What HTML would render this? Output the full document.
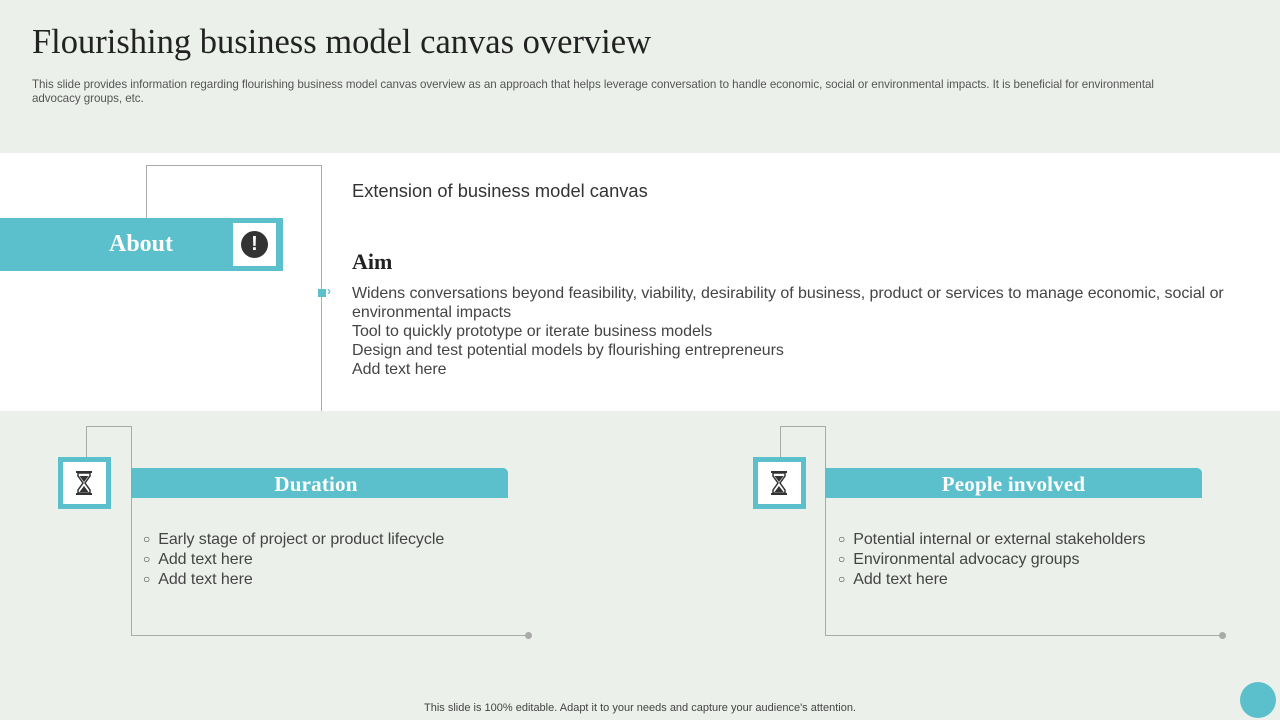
<!DOCTYPE html>
<html><head><style>
*{margin:0;padding:0;box-sizing:border-box}
body{width:1280px;height:720px;background:#ecf0eb;position:relative;overflow:hidden;font-family:"Liberation Sans",sans-serif;color:#404040}
.a{position:absolute}
h1{position:absolute;left:32px;top:23px;font-family:"Liberation Serif",serif;font-weight:normal;font-size:34.5px;color:#222}
.sub{left:32px;top:78px;font-size:11.6px;line-height:14px;color:#555;width:1165px;letter-spacing:-0.05px}
.white{left:0;top:153px;width:1280px;height:258px;background:#fff}
.teal{background:#5bbfcc}
.ser{font-family:"Liberation Serif",serif;font-weight:bold;color:#fff}
.ln{border-color:#aaa;border-style:solid;border-width:0}
.t{font-size:16px;line-height:19px;color:#444;letter-spacing:-0.05px}
ul{list-style:none}
li:before{content:"○";font-size:12px;margin-right:8px;position:relative;top:-1px}
</style></head><body>
<h1>Flourishing business model canvas overview</h1>
<div class="a sub">This slide provides information regarding flourishing business model canvas overview as an approach that helps leverage conversation to handle economic, social or environmental impacts. It is beneficial for environmental advocacy groups, etc.</div>
<div class="a white"></div>
<div class="a ln" style="left:146px;top:165px;width:176px;height:53px;border-width:1px 1px 0 1px"></div>
<div class="a ln" style="left:321px;top:218px;height:193px;border-left-width:1px"></div>
<div class="a teal" style="left:0;top:218px;width:283px;height:53px"></div>
<div class="a ser" style="left:0;top:231px;width:282px;text-align:center;font-size:24px">About</div>
<div class="a" style="left:233px;top:223px;width:43px;height:43px;background:#fff"></div>
<div class="a" style="left:241px;top:231px;width:27px;height:27px;border-radius:50%;background:#333;color:#fff;font-weight:bold;text-align:center;font-size:20px;line-height:27px">!</div>
<div class="a" style="left:318px;top:289px;width:8px;height:8px;background:#5bbfcc"></div>
<div class="a" style="left:327px;top:284px;font-size:12px;color:#5bbfcc;font-weight:bold">›</div>
<div class="a" style="left:352px;top:180px;font-size:18.3px;color:#333">Extension of business model canvas</div>
<div class="a" style="left:352px;top:249px;font-family:'Liberation Serif',serif;font-weight:bold;font-size:22px;color:#222">Aim</div>
<div class="a t" style="left:352px;top:284px;width:890px">Widens conversations beyond feasibility, viability, desirability of business, product or services to manage economic, social or environmental impacts<br>Tool to quickly prototype or iterate business models<br>Design and test potential models by flourishing entrepreneurs<br>Add text here</div>

<svg width="0" height="0" style="position:absolute"><defs><g id="hg"><rect x="0" y="0" width="16" height="2" fill="#333"/><rect x="0" y="22" width="16" height="2" fill="#333"/><path d="M2 2 H14 V5 L9 12 L14 19 V22 H2 V19 L7 12 L2 5 Z" fill="none" stroke="#333" stroke-width="1.5"/><path d="M3.5 5 H12.5 L8 11 Z" fill="#333"/><path d="M8 15 L12.5 21 H3.5 Z" fill="#333"/></g></defs></svg>

<div class="a ln" style="left:86px;top:426px;width:46px;height:31px;border-width:1px 1px 0 1px"></div>
<div class="a ln" style="left:131px;top:457px;width:398px;height:179px;border-width:0 0 1px 1px"></div>
<div class="a" style="left:525px;top:632px;width:7px;height:7px;border-radius:50%;background:#aaa"></div>
<div class="a" style="left:58px;top:457px;width:53px;height:52px;border:5px solid #5bbfcc;background:#fff"></div>
<svg class="a" style="left:76px;top:471px" width="16" height="24"><use href="#hg"/></svg>
<div class="a teal" style="left:131px;top:468px;width:377px;height:30px;border-top-right-radius:5px"></div>
<div class="a ser" style="left:131px;top:472px;width:370px;text-align:center;font-size:21px;letter-spacing:0.2px">Duration</div>
<ul class="a t" style="left:143px;top:530px"><li>Early stage of project or product lifecycle</li><li>Add text here</li><li>Add text here</li></ul>

<div class="a ln" style="left:780px;top:426px;width:46px;height:31px;border-width:1px 1px 0 1px"></div>
<div class="a ln" style="left:825px;top:457px;width:398px;height:179px;border-width:0 0 1px 1px"></div>
<div class="a" style="left:1219px;top:632px;width:7px;height:7px;border-radius:50%;background:#aaa"></div>
<div class="a" style="left:753px;top:457px;width:53px;height:52px;border:5px solid #5bbfcc;background:#fff"></div>
<svg class="a" style="left:771px;top:471px" width="16" height="24"><use href="#hg"/></svg>
<div class="a teal" style="left:825px;top:468px;width:377px;height:30px;border-top-right-radius:5px"></div>
<div class="a ser" style="left:825px;top:472px;width:377px;text-align:center;font-size:21px;letter-spacing:0.2px">People involved</div>
<ul class="a t" style="left:838px;top:530px"><li>Potential internal or external stakeholders</li><li>Environmental advocacy groups</li><li>Add text here</li></ul>

<div class="a" style="left:0;top:702px;width:1280px;text-align:center;font-size:11px;color:#444">This slide is 100% editable. Adapt it to your needs and capture your audience's attention.</div>
<div class="a" style="left:1240px;top:682px;width:36px;height:36px;border-radius:50%;background:#5bbfcc"></div>
</body></html>
